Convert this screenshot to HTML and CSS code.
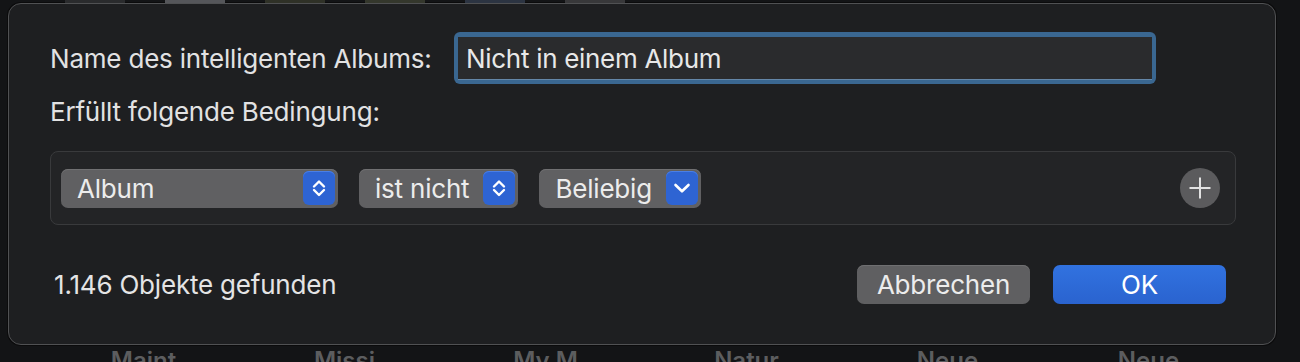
FILE: index.html
```html
<!DOCTYPE html>
<html lang="de">
<head>
  <meta charset="UTF-8">
  <meta name="viewport" content="width=device-width, initial-scale=1.0">
  <title>Intelligentes Album</title>
  <link rel="stylesheet" href="styles.css">
</head>
<body>

  <div class="thumbs">
    <span class="thumb t1"></span>
    <span class="thumb t2"></span>
    <span class="thumb t3"></span>
    <span class="thumb t4"></span>
    <span class="thumb t5"></span>
    <span class="thumb t6"></span>
  </div>

  <!-- Sheet: intelligentes Album -->
  <div class="sheet">
    <div class="row name-row">
      <label class="label name-label" for="albumName">Name des intelligenten Albums:</label>
      <div class="field-ring">
        <input class="field" id="albumName" type="text" value="Nicht in einem Album">
      </div>
    </div>

    <p class="label cond-label">Erfüllt folgende Bedingung:</p>

    <div class="rules">
      <div class="popup popup-wide">
        <span>Album</span>
        <span class="stepper">
          <svg width="32" height="34" viewBox="0 0 32 34"><path d="M11 15.5 L16 10.5 L21 15.5 M11 19 L16 24 L21 19" fill="none" stroke="#fff" stroke-width="2.4" stroke-linecap="round" stroke-linejoin="round"/></svg>
        </span>
      </div>
      <div class="popup">
        <span>ist nicht</span>
        <span class="stepper">
          <svg width="32" height="34" viewBox="0 0 32 34"><path d="M11 15.5 L16 10.5 L21 15.5 M11 19 L16 24 L21 19" fill="none" stroke="#fff" stroke-width="2.4" stroke-linecap="round" stroke-linejoin="round"/></svg>
        </span>
      </div>
      <div class="popup">
        <span>Beliebig</span>
        <span class="stepper">
          <svg width="32" height="34" viewBox="0 0 32 34"><path d="M9.5 14 L16 20.3 L22.5 14" fill="none" stroke="#fff" stroke-width="2.6" stroke-linecap="round" stroke-linejoin="round"/></svg>
        </span>
      </div>
      <button class="add-btn" title="Bedingung hinzufügen">
        <svg width="22" height="22" viewBox="0 0 22 22"><path d="M11 0.5 V21.5 M0.5 11 H21.5" stroke="#e2e2e2" stroke-width="2"/></svg>
      </button>
    </div>

    <div class="footer">
      <span class="count">1.146 Objekte gefunden</span>
      <div class="actions">
        <button class="btn btn-cancel">Abbrechen</button>
        <button class="btn btn-ok">OK</button>
      </div>
    </div>
  </div>

  <div class="album-names">
    <span>Maint</span>
    <span>Missi</span>
    <span>My M</span>
    <span>Natur</span>
    <span>Neue</span>
    <span>Neue</span>
  </div>

</body>
</html>
```

FILE: styles.css
```css
body {
  margin: 0;
  height: 362px;
  overflow: hidden;
  background-color: #131416;
  font-family: Inter, "Noto Sans", sans-serif;
  color: #e4e4e5;
}

.thumbs {
  display: flex;
  gap: 40px;
  height: 3px;
  padding-left: 65px;
}

.thumb {
  width: 60px;
  background-color: #2a2b2d;
}

.t2 { background-color: #55565a; }
.t3 { background-color: #2f3127; }
.t4 { background-color: #34372c; }
.t5 { background-color: #2c3442; }
.t6 { background-color: #38383a; }

.sheet {
  box-sizing: border-box;
  width: 1268px;
  height: 342px;
  margin-left: 8px;
  padding: 28px 39px 0 41px;
  background-color: #1e1f21;
  border: 1px solid #505153;
  border-radius: 13px;
  box-shadow: 0 0 0 1px #0b0b0c;
}

.row {
  display: flex;
  align-items: center;
}

.label {
  font-size: 26px;
  letter-spacing: -0.2px;
  color: #e2e2e3;
  margin: 0;
}

.name-label {
  width: 404px;
  flex-shrink: 0;
}

.field-ring {
  width: 702px;
  height: 52px;
  box-sizing: border-box;
  padding: 5px 4px 4px;
  background-color: #3a6791;
  border-radius: 6px;
}

.field {
  box-sizing: border-box;
  width: 100%;
  height: 100%;
  border: none;
  border-bottom: 1px solid #6487a8;
  background-color: #2a2b2d;
  color: #e8e8e8;
  font-family: inherit;
  font-size: 26px;
  letter-spacing: -0.3px;
  padding: 0 8px;
  outline: none;
}

.cond-label {
  margin-top: 12px;
}

.rules {
  display: flex;
  align-items: center;
  gap: 21px;
  height: 72px;
  margin-top: 24px;
  padding: 0 15px 0 10px;
  background-color: #232426;
  border: 1px solid #393a3c;
  border-radius: 8px;
}

.popup {
  display: flex;
  align-items: center;
  justify-content: space-between;
  gap: 14px;
  height: 39px;
  padding: 0 3px 0 16px;
  background-color: #606062;
  border-radius: 7px;
  box-shadow: inset 0 1px 0 #707072;
  font-size: 26px;
  letter-spacing: -0.2px;
  color: #ececec;
}

.popup-wide {
  width: 277px;
  box-sizing: border-box;
}

.stepper {
  display: flex;
  width: 32px;
  height: 34px;
  background-color: #2e64d3;
  border-radius: 6px;
  box-shadow: inset 0 1px 0 #4a7fe6;
}

.add-btn {
  margin-left: auto;
  width: 40px;
  height: 40px;
  padding: 0;
  display: flex;
  align-items: center;
  justify-content: center;
  border: none;
  border-radius: 50%;
  background-color: #5b5b5d;
  cursor: pointer;
}

.footer {
  display: flex;
  align-items: center;
  justify-content: space-between;
  margin-top: 40px;
  padding: 0 10px 0 4px;
}

.count {
  font-size: 26px;
  letter-spacing: -0.2px;
  color: #e4e4e5;
}

.actions {
  display: flex;
  gap: 23px;
}

.btn {
  width: 173px;
  height: 39px;
  border: none;
  border-radius: 7px;
  font-family: inherit;
  font-size: 26px;
  letter-spacing: -0.2px;
  color: #ececec;
  cursor: pointer;
}

.btn-cancel {
  background-color: #5f5f61;
  box-shadow: inset 0 1px 0 #6f6f71;
}

.btn-ok {
  background: linear-gradient(#3172e0, #2a63cf);
  color: #fff;
}

.album-names {
  display: flex;
  padding-left: 43px;
  margin-top: 1px;
  font-size: 24px;
  font-weight: 600;
  color: #5c5d5f;
}

.album-names span {
  width: 201px;
  text-align: center;
}
```
